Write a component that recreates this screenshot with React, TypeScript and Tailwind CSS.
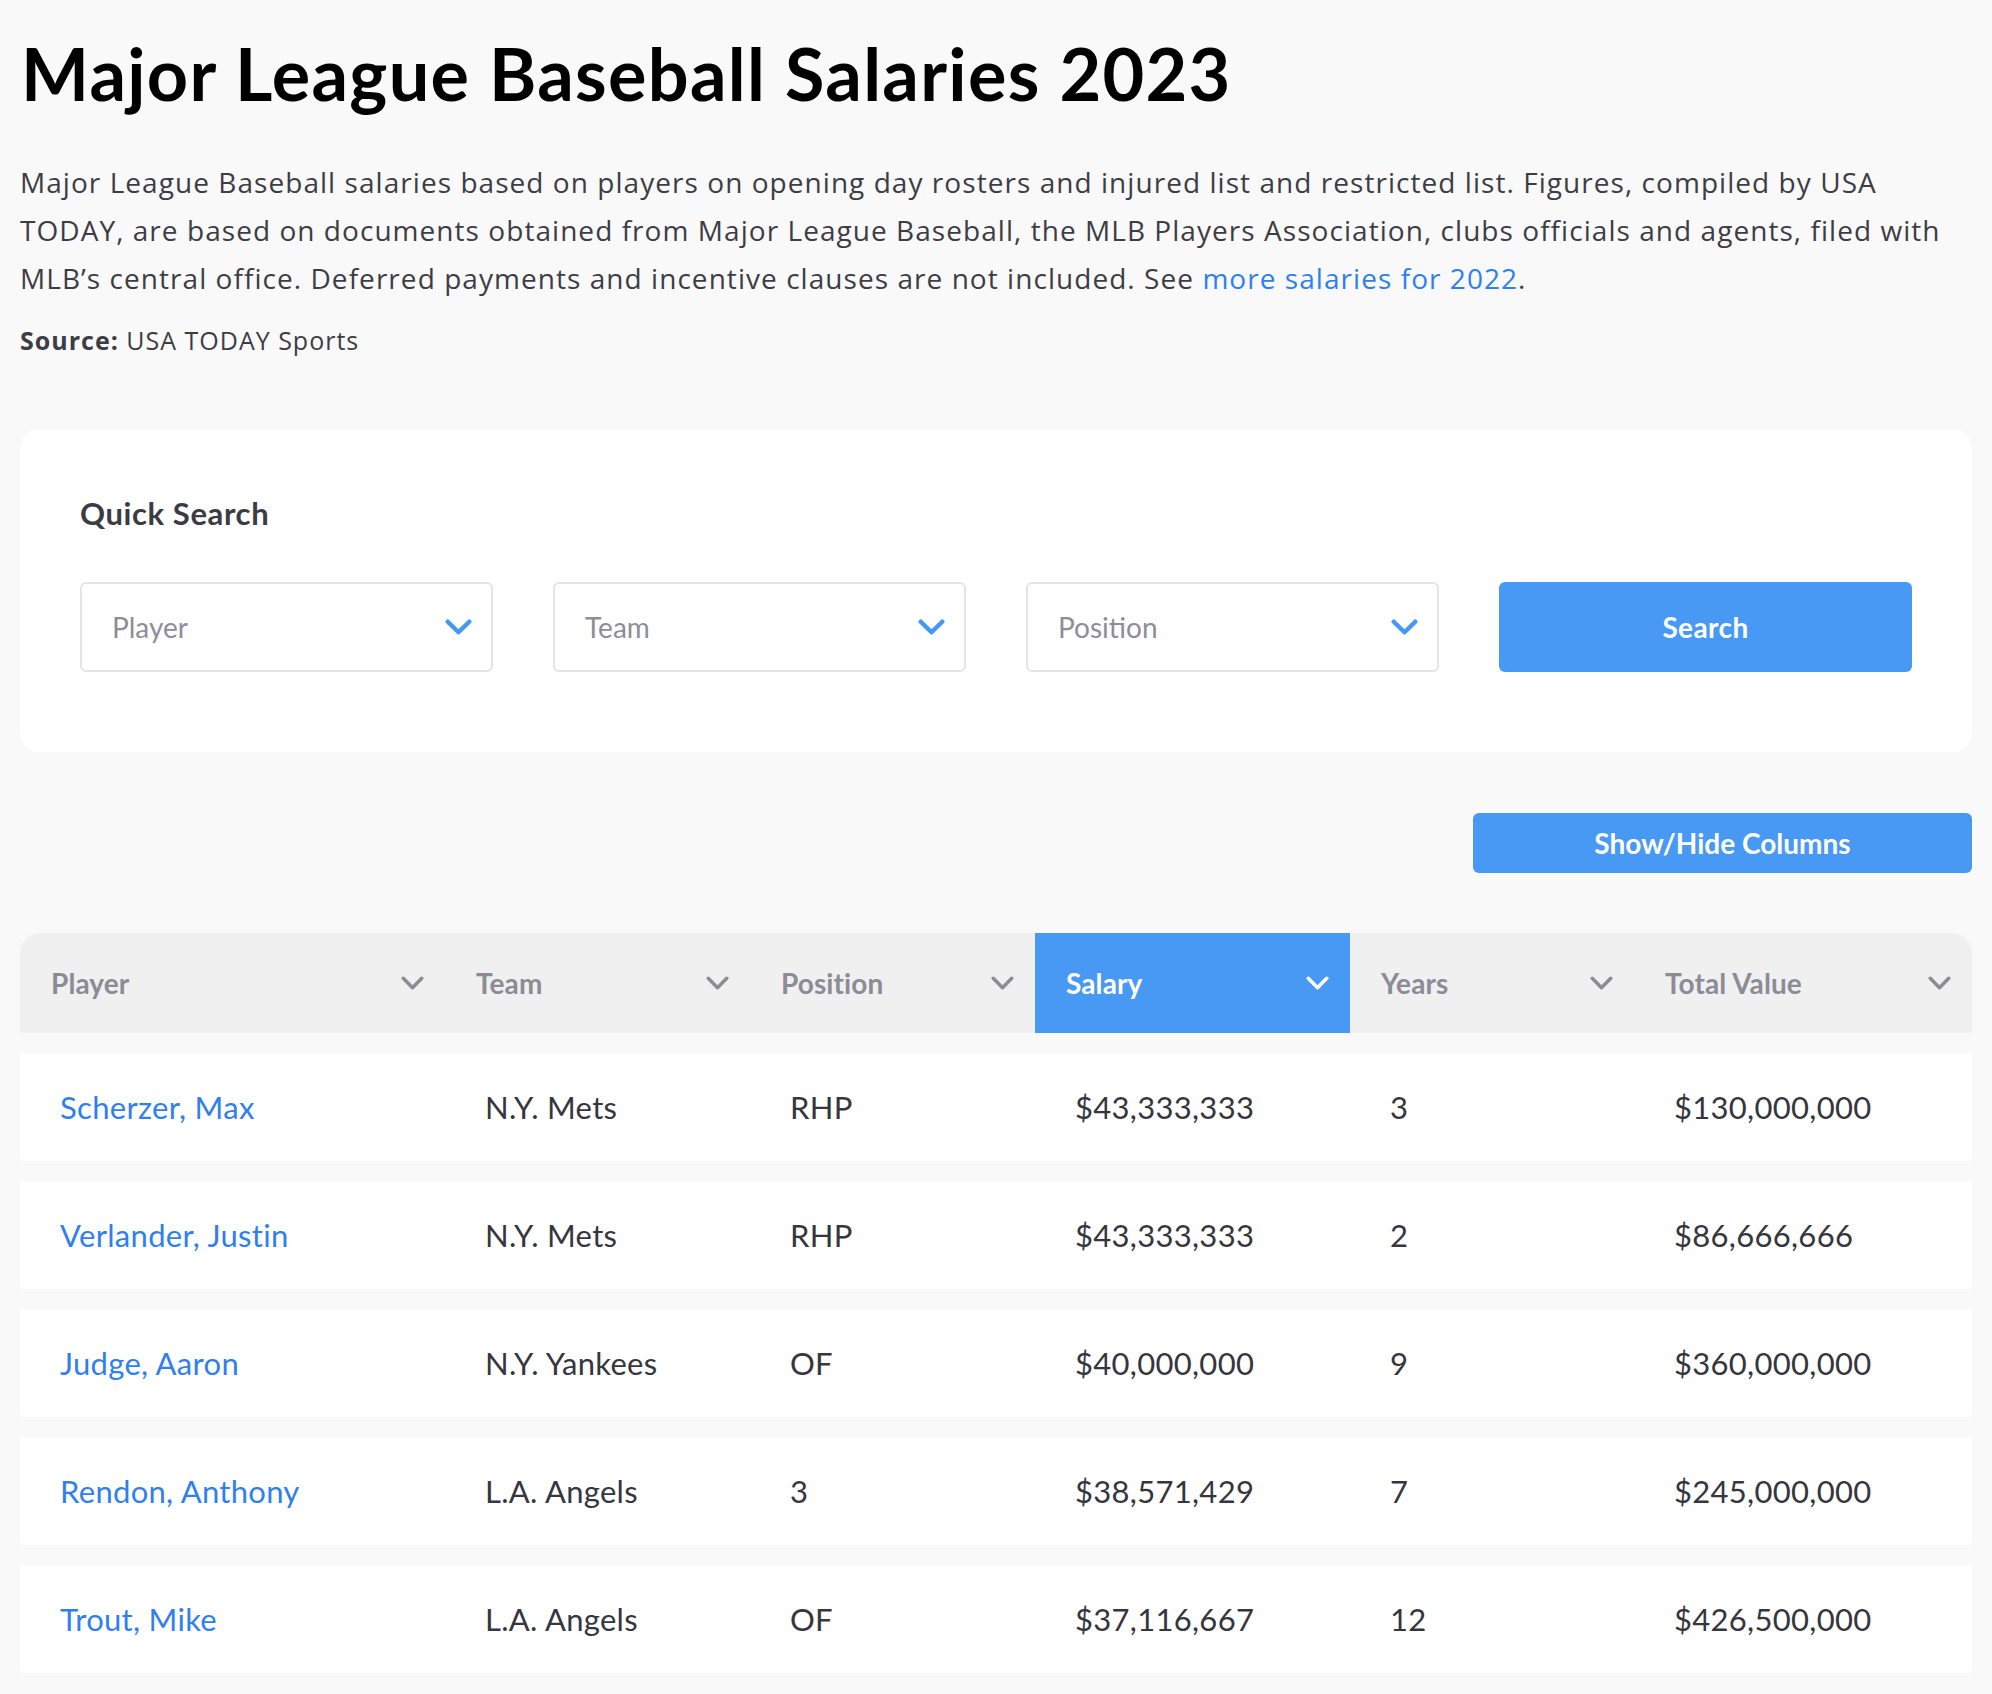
import React from 'react'

const LATO = "font-['Lato','Liberation_Sans',sans-serif]"
const OPEN = "font-['Open_Sans','Liberation_Sans',sans-serif]"

const cols = [
  { key: 'player', label: 'Player', w: 'w-[425px]' },
  { key: 'team', label: 'Team', w: 'w-[305px]' },
  { key: 'position', label: 'Position', w: 'w-[285px]' },
  { key: 'salary', label: 'Salary', w: 'w-[315px]' },
  { key: 'years', label: 'Years', w: 'w-[284px]' },
  { key: 'total', label: 'Total Value', w: 'w-[338px]' },
]

const rows = [
  { player: 'Scherzer, Max', team: 'N.Y. Mets', position: 'RHP', salary: '$43,333,333', years: '3', total: '$130,000,000' },
  { player: 'Verlander, Justin', team: 'N.Y. Mets', position: 'RHP', salary: '$43,333,333', years: '2', total: '$86,666,666' },
  { player: 'Judge, Aaron', team: 'N.Y. Yankees', position: 'OF', salary: '$40,000,000', years: '9', total: '$360,000,000' },
  { player: 'Rendon, Anthony', team: 'L.A. Angels', position: '3', salary: '$38,571,429', years: '7', total: '$245,000,000' },
  { player: 'Trout, Mike', team: 'L.A. Angels', position: 'OF', salary: '$37,116,667', years: '12', total: '$426,500,000' },
]

function Chevron({ className, w, h, sw }: { className: string; w: number; h: number; sw: number }) {
  return (
    <svg width={w} height={h} viewBox={`0 0 ${w} ${h}`} className={className} fill="none">
      <polyline
        points={`${sw / 2 + 0.5},${sw / 2 + 0.5} ${w / 2},${h - sw / 2 - 0.5} ${w - sw / 2 - 0.5},${sw / 2 + 0.5}`}
        stroke="currentColor"
        strokeWidth={sw}
        strokeLinecap="round"
        strokeLinejoin="round"
      />
    </svg>
  )
}

function SelectBox({ label }: { label: string }) {
  return (
    <div className="h-[90px] flex items-center justify-between rounded-[6px] border-2 border-[#e3e3e8] bg-white pl-[30px] pr-[19px]">
      <span className="text-[28px] text-[#8e8d98]">{label}</span>
      <Chevron className="text-[#4599f4]" w={27} h={16} sw={4.5} />
    </div>
  )
}

export default function App() {
  return (
    <div className={`${LATO} min-h-screen bg-[#f9f9f9] px-[20px] pb-[19px]`}>
      <h1 className="pt-[37px] text-[72px] font-bold leading-none tracking-[1.3px] text-black ml-[1px]">
        Major League Baseball Salaries 2023
      </h1>
      <p className={`${OPEN} mt-[49px] text-[28px] leading-[48px] tracking-[1.05px] text-[#3d3d46]`}>
        Major League Baseball salaries based on players on opening day rosters and injured list and restricted list. Figures, compiled by USA
        <br />
        TODAY, are based on documents obtained from Major League Baseball, the MLB Players Association, clubs officials and agents, filed with
        <br />
        MLB’s central office. Deferred payments and incentive clauses are not included. See{' '}
        <a className="text-[#2f7ff0]" href="#">more salaries for 2022</a>.
      </p>
      <p className={`${OPEN} mt-[22px] text-[25px] leading-[32px] tracking-[1px] text-[#3d3d46]`}>
        <span className="font-bold">Source:</span> USA TODAY Sports
      </p>

      <div className="mt-[73px] rounded-[20px] bg-white px-[60px] pt-[60px] pb-[80px]">
        <h2 className="text-[31px] font-bold leading-[48px] tracking-[0.6px] text-[#3b3b43]">Quick Search</h2>
        <div className="mt-[45px] grid grid-cols-4 gap-[60px]">
          <SelectBox label="Player" />
          <SelectBox label="Team" />
          <SelectBox label="Position" />
          <button className="h-[90px] rounded-[6px] bg-[#4899f4] text-[28px] font-bold tracking-[0.4px] text-white">Search</button>
        </div>
      </div>

      <div className="mt-[61px] flex justify-end">
        <button className="h-[60px] w-[499px] rounded-[6px] bg-[#4899f4] text-[28px] font-bold text-white">
          Show/Hide Columns
        </button>
      </div>

      <div className="mt-[60px]">
        <div className="flex h-[100px] overflow-hidden rounded-t-[20px] bg-[#f0f0f1]">
          {cols.map((c) => {
            const active = c.key === 'salary'
            return (
              <div
                key={c.key}
                className={`${c.w} flex items-center justify-between pl-[31px] pr-[21px] ${active ? 'bg-[#4899f4] text-white' : 'text-[#8d8c96]'}`}
              >
                <span className="text-[28px] font-bold tracking-[0.1px]">{c.label}</span>
                <Chevron className={active ? 'text-white' : 'text-[#8d8c96]'} w={23} h={14} sw={3.5} />
              </div>
            )
          })}
        </div>
        <div className="flex flex-col gap-[20px] mt-[20px]">
          {rows.map((r, i) => (
            <div key={i} className="flex h-[108px] items-center rounded-[4px] bg-white">
              {cols.map((c) => (
                <div
                  key={c.key}
                  className={`${c.w} pl-[40px] text-[31px] tracking-[0.3px] ${c.key === 'player' ? 'text-[#2f7ff0]' : 'text-[#36363e]'}`}
                >
                  {(r as any)[c.key]}
                </div>
              ))}
            </div>
          ))}
        </div>
      </div>
    </div>
  )
}
